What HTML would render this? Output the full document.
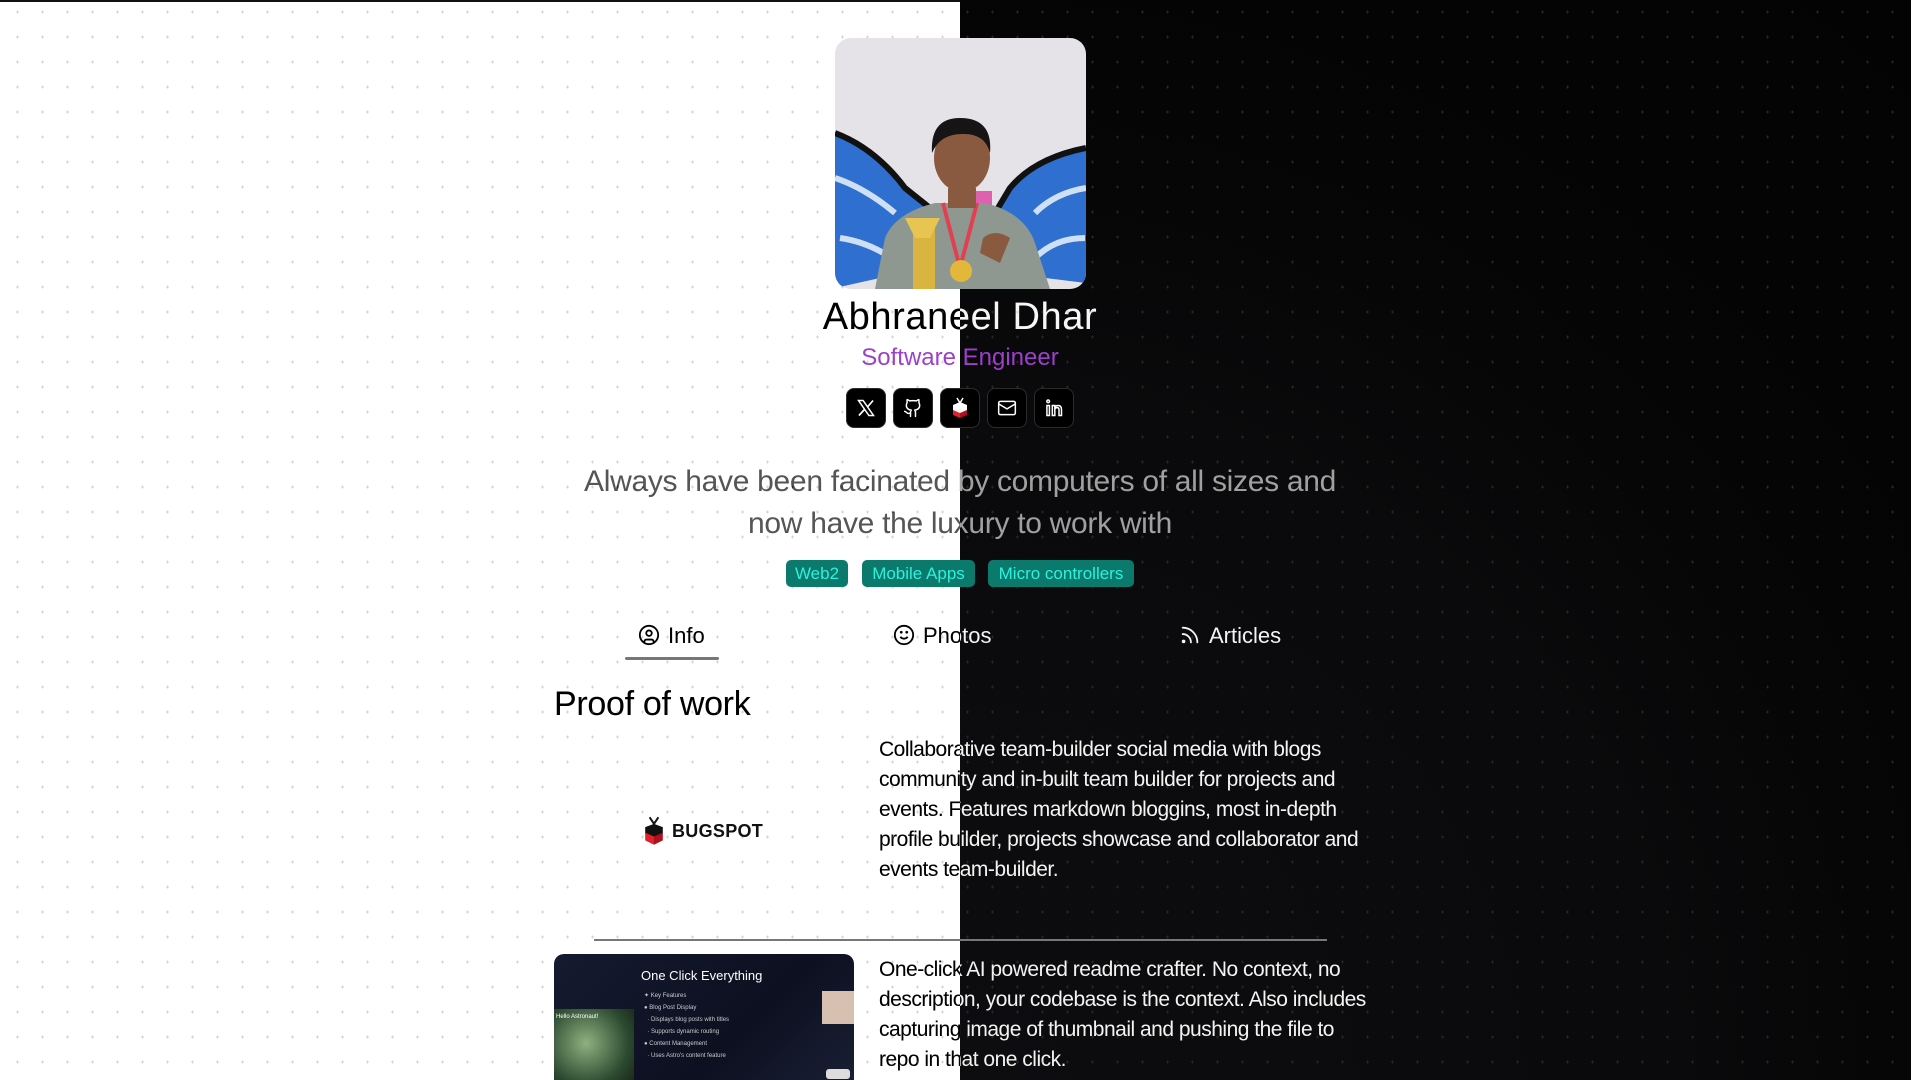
<!DOCTYPE html>
<html><head><meta charset="utf-8"><style>
*{margin:0;padding:0;box-sizing:border-box}
html,body{width:1920px;height:1080px;overflow:hidden}
body{position:relative;font-family:"Liberation Sans",sans-serif;background:#fff}
.bgL{position:absolute;left:0;top:0;width:960px;height:1080px;background:#fff}
.bgR{position:absolute;left:960px;top:0;width:951px;height:1080px;background:radial-gradient(circle at 0px 1100px,#0d0d10 0,#0a0a0c 700px,#050505 1000px,#030303 100%)}
.gridL{position:absolute;left:0;top:0;width:960px;height:1080px;background-image:url("data:image/svg+xml;utf8,<svg xmlns='http://www.w3.org/2000/svg' width='25' height='25'><path d='M16 12h3M17.5 10.5v3' stroke='%23d4d4d4' stroke-width='1'/></svg>")}
.gridR{position:absolute;left:960px;top:0;width:951px;height:1080px;background-image:url("data:image/svg+xml;utf8,<svg xmlns='http://www.w3.org/2000/svg' width='25' height='25'><path d='M16 12h3M17.5 10.5v3' stroke='%23262626' stroke-width='1'/></svg>");background-position:-960px 0}
.topline{position:absolute;left:0;top:0;width:960px;height:2px;background:#111}
.d{position:absolute;color:#fff;mix-blend-mode:difference;white-space:nowrap}
.photo{position:absolute;left:835px;top:38px;width:251px;height:251px;border-radius:16px;overflow:hidden}
.name{left:0;width:1920px;text-align:center;top:296px;font-size:38px;letter-spacing:0.6px}
.sub{position:absolute;left:0;width:1920px;text-align:center;top:344px;font-size:24px;color:#9c3fc9}
.btn{position:absolute;top:388px;width:40px;height:40px;border-radius:8px;background:#000;border:1px solid #2b2b2b;display:flex;align-items:center;justify-content:center}
.tag{left:0;width:1920px;text-align:center;font-size:30px;color:#aaa;letter-spacing:-0.3px}
.pill{position:absolute;top:560px;height:27px;border-radius:5px;background:#0b7a6c;color:#2ff0dc;font-size:17px;line-height:27px;text-align:center}
.tab{font-size:22px;top:623px}
.proj{left:879px;font-size:21px;letter-spacing:-0.5px;line-height:30px;white-space:normal;width:500px}
</style></head><body>
<div class="bgL"></div><div class="bgR"></div><div class="gridL"></div><div class="gridR"></div>
<div class="topline"></div>

<div class="photo"><svg width="251" height="251" viewBox="0 0 251 251">
<rect width="251" height="251" fill="#e6e3e8"/>
<path d="M0 95 Q40 110 70 150 L95 170 L90 230 L0 250Z" fill="#2f6fd0"/>
<path d="M0 95 Q40 110 70 150 L95 170" fill="none" stroke="#111" stroke-width="6"/>
<path d="M0 140 Q30 150 60 175 M5 200 Q40 205 70 230" stroke="#cfe0f5" stroke-width="6" fill="none"/>
<path d="M251 110 Q200 120 175 150 L160 175 L170 235 L251 245Z" fill="#2f6fd0"/>
<path d="M251 110 Q200 120 175 150 L160 175" fill="none" stroke="#111" stroke-width="6"/>
<path d="M251 150 Q220 155 200 175 M250 200 Q220 200 200 220" stroke="#cfe0f5" stroke-width="6" fill="none"/>
<rect x="132" y="153" width="25" height="15" fill="#e060b0"/>
<path d="M40 251 L50 200 Q60 175 100 165 L150 165 Q190 175 200 205 L215 251Z" fill="#8e9890"/>
<path d="M108 165 L125 230 L142 165" stroke="#e04050" stroke-width="4" fill="none"/>
<circle cx="126" cy="233" r="11" fill="#e3b83a"/>
<rect x="78" y="185" width="22" height="66" fill="#d9b440"/>
<path d="M70 180 L105 180 L95 200 L80 200Z" fill="#e8c450"/>
<rect x="113" y="150" width="28" height="20" fill="#8a5a40"/>
<ellipse cx="127" cy="120" rx="28" ry="34" fill="#8a5a40"/>
<path d="M97 115 Q95 80 125 80 Q158 80 155 115 Q150 95 127 96 Q105 96 97 115Z" fill="#161414"/>
<path d="M148 200 Q160 190 175 200 L165 225 L145 215Z" fill="#8a5a40"/>
</svg></div>

<div class="d name">Abhraneel Dhar</div>
<div class="sub">Software Engineer</div>

<div class="btn" style="left:846px"><svg width="20" height="20" viewBox="0 0 24 24"><path d="M3 3h5.5l12.5 18h-5.5Z" fill="none" stroke="#fff" stroke-width="1.8"/><path d="M20.5 3L13.5 11M10.5 13.5L3.5 21" stroke="#fff" stroke-width="2"/></svg></div>
<div class="btn" style="left:893px"><svg width="20" height="20" viewBox="0 0 24 24" fill="none" stroke="#fff" stroke-width="1.8" stroke-linecap="round" stroke-linejoin="round"><path d="M15 22v-4a4.8 4.8 0 0 0-1-3.5c3 0 6-2 6-5.5.08-1.25-.27-2.48-1-3.5.28-1.15.28-2.35 0-3.5 0 0-1 0-3 1.5-2.64-.5-5.36-.5-8 0C6 2 5 2 5 2c-.3 1.15-.3 2.35 0 3.5A5.4 5.4 0 0 0 4 9c0 3.5 3 5.5 6 5.5-.39.49-.68 1.05-.85 1.65S8.93 17.38 9 18v4"/><path d="M9 18c-4.51 2-5-2-7-2"/></svg></div>
<div class="btn" style="left:940px"><svg width="20" height="22" viewBox="0 0 20 22"><path d="M7 1l3 5 3-5" stroke="#fff" stroke-width="1.5" fill="none"/><path d="M3 8l7-3 7 3v6l-7 3-7-3z" fill="#fff"/><path d="M3 13l7 3v5l-7-3z" fill="#e0202a"/><path d="M17 13l-7 3v5l7-3z" fill="#b0101a"/></svg></div>
<div class="btn" style="left:987px"><svg width="20" height="20" viewBox="0 0 24 24" fill="none" stroke="#fff" stroke-width="1.8"><rect x="2" y="4" width="20" height="16" rx="2"/><path d="M2 7l10 6 10-6"/></svg></div>
<div class="btn" style="left:1034px"><svg width="20" height="20" viewBox="0 0 24 24" fill="none" stroke="#fff" stroke-width="1.8"><circle cx="5" cy="4" r="1.6"/><path d="M3.5 9h3v12h-3z"/><path d="M10 21V9h3v2c1-1.5 2.5-2 4-2 3 0 4 2 4 5v7h-3v-7c0-1.5-.5-2.5-2-2.5S13 12.5 13 14v7z"/></svg></div>

<div class="d tag" style="top:465px">Always have been facinated by computers of all sizes and</div>
<div class="d tag" style="top:507px">now have the luxury to work with</div>

<div class="pill" style="left:786px;width:62px">Web2</div>
<div class="pill" style="left:862px;width:113px">Mobile Apps</div>
<div class="pill" style="left:988px;width:146px">Micro controllers</div>

<div class="d tab" style="left:638px"><svg width="22" height="22" viewBox="0 0 24 24" fill="none" stroke="#fff" stroke-width="2" style="vertical-align:-3px;margin-right:8px"><circle cx="12" cy="12" r="10"/><circle cx="12" cy="10" r="3"/><path d="M7 20.7v-1.7a2 2 0 0 1 2-2h6a2 2 0 0 1 2 2v1.7"/></svg>Info</div>
<div style="position:absolute;left:625px;top:657px;width:94px;height:3px;background:#777;border-radius:2px"></div>
<div class="d tab" style="left:893px"><svg width="22" height="22" viewBox="0 0 24 24" fill="none" stroke="#fff" stroke-width="2" style="vertical-align:-3px;margin-right:8px"><circle cx="12" cy="12" r="10"/><path d="M8 14s1.5 2 4 2 4-2 4-2"/><path d="M9 9h.01M15 9h.01" stroke-linecap="round" stroke-width="3"/></svg>Photos</div>
<div class="d tab" style="left:1179px"><svg width="22" height="22" viewBox="0 0 24 24" fill="none" stroke="#fff" stroke-width="2" stroke-linecap="round" style="vertical-align:-3px;margin-right:8px"><path d="M4 11a9 9 0 0 1 9 9"/><path d="M4 4a16 16 0 0 1 16 16"/><circle cx="5" cy="19" r="1"/></svg>Articles</div>

<div class="d" style="left:554px;top:685px;font-size:34px;letter-spacing:-0.3px">Proof of work</div>

<div style="position:absolute;left:643px;top:816px;display:flex;align-items:center">
<svg width="22" height="30" viewBox="0 0 20 27"><path d="M6 1l4 6 4-6" stroke="#111" stroke-width="1.8" fill="none"/><path d="M2 10l8-3 8 3v6l-8 3-8-3z" fill="#111"/><path d="M2 15l8 3.5V26L2 22z" fill="#e0202a"/><path d="M18 15l-8 3.5V26l8-4z" fill="#b0101a"/></svg>
<span style="font-weight:bold;font-size:18px;margin-left:7px;color:#111;letter-spacing:0.3px">BUGSPOT</span></div>

<div class="d proj" style="top:735px">Collaborative team-builder social media with blogs community and in-built team builder for projects and events. Features markdown bloggins, most in-depth profile builder, projects showcase and collaborator and events team-builder.</div>

<div style="position:absolute;left:594px;top:939px;width:733px;height:2px;background:#777"></div>

<div style="position:absolute;left:554px;top:954px;width:300px;height:140px;border-radius:10px;overflow:hidden;background:linear-gradient(135deg,#151a30,#0c1020 60%,#1a2035)">
<div style="position:absolute;left:87px;top:14px;color:#fff;font-size:13px">One Click Everything</div>
<div style="position:absolute;left:90px;top:36px;color:#ccc;font-size:6px;line-height:12px">✦ Key Features<br>● Blog Post Display<br>&nbsp;&nbsp;· Displays blog posts with titles<br>&nbsp;&nbsp;· Supports dynamic routing<br>● Content Management<br>&nbsp;&nbsp;· Uses Astro's content feature</div>
<div style="position:absolute;left:0;top:55px;width:80px;height:85px;background:radial-gradient(circle at 40% 40%,#8fb080,#2c4a30 60%,#101810)"></div>
<div style="position:absolute;left:2px;top:60px;color:#fff;font-size:6px">Hello Astronaut!</div>
<div style="position:absolute;left:268px;top:37px;width:32px;height:33px;background:#d8c0b0"></div>
<div style="position:absolute;left:272px;top:115px;width:24px;height:10px;background:#ddd;border-radius:3px"></div>
</div>

<div class="d proj" style="top:955px;width:495px">One-click AI powered readme crafter. No context, no description, your codebase is the context. Also includes capturing image of thumbnail and pushing the file to repo in that one click.</div>
</body></html>
